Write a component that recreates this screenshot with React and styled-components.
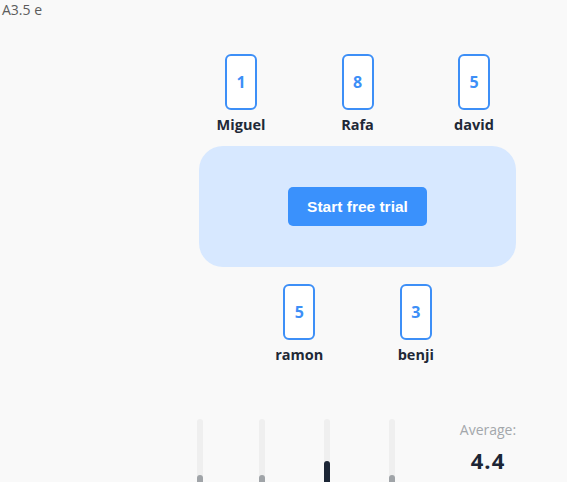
import React from "react";
import styled, { createGlobalStyle } from "styled-components";

const Global = createGlobalStyle`
  html, body { margin: 0; padding: 0; background: #f9f9f9; }
  body { font-family: "Open Sans", "Noto Sans", sans-serif; color: #1f2937; }
  * { box-sizing: border-box; }
`;

const Page = styled.div`
  width: 567px;
  height: 482px;
  overflow: hidden;
`;

const Version = styled.div`
  padding-left: 2px;
  font-size: 14px;
  line-height: 20px;
  color: #5c5c5c;
`;

const Board = styled.div`
  margin-left: 199px;
  width: 317px;
  padding-top: 34px;
  display: flex;
  flex-direction: column;
`;

const PlayerRow = styled.div`
  display: flex;
  justify-content: center;
  gap: 32.5px;
  margin-top: ${(p) => p.$top || 0}px;
`;

const Player = styled.div`
  width: 84px;
  display: flex;
  flex-direction: column;
  align-items: center;
`;

const Card = styled.div`
  width: 32px;
  height: 56px;
  border: 2px solid #3d8ff7;
  border-radius: 6px;
  background: #ffffff;
  display: flex;
  align-items: center;
  justify-content: center;
  font-size: 16px;
  font-weight: 700;
  color: #3d8ff7;
`;

const Name = styled.div`
  margin-top: 5px;
  font-size: 14.5px;
  font-weight: 700;
  line-height: 20px;
  color: #1f2937;
`;

const Table = styled.div`
  margin-top: 11px;
  height: 121px;
  border-radius: 24px;
  background: #d7e8ff;
  display: flex;
  align-items: center;
  justify-content: center;
`;

const TrialButton = styled.button`
  width: 139px;
  height: 39px;
  border: none;
  border-radius: 5px;
  background: #3a91fc;
  color: #ffffff;
  font-family: "Liberation Sans", Arial, sans-serif;
  font-size: 15.5px;
  font-weight: 700;
  cursor: pointer;
`;

const Stats = styled.div`
  margin-left: 197px;
  margin-top: 54px;
  display: flex;
  align-items: flex-start;
`;

const Bars = styled.div`
  display: grid;
  grid-template-columns: 62px 65px 65px 6px;
`;

const Track = styled.div`
  width: 6px;
  height: 100px;
  border-radius: 3px;
  background: #efefef;
  display: flex;
  flex-direction: column;
  justify-content: flex-end;
`;

const Fill = styled.div`
  width: 6px;
  border-radius: 3px;
  background: ${(p) => (p.$active ? "#1c2636" : "#a0a4a8")};
`;

const Average = styled.div`
  margin-left: 60px;
  width: 66px;
  display: flex;
  flex-direction: column;
  align-items: center;
  padding-top: 1px;
`;

const AvgLabel = styled.div`
  font-size: 14px;
  line-height: 20px;
  color: #a3a7ab;
`;

const AvgValue = styled.div`
  margin-top: 6px;
  font-size: 22px;
  line-height: 28px;
  font-weight: 700;
  letter-spacing: 1px;
  color: #1c2636;
`;

const top = [
  { name: "Miguel", v: 1 },
  { name: "Rafa", v: 8 },
  { name: "david", v: 5 },
];
const bottom = [
  { name: "ramon", v: 5 },
  { name: "benji", v: 3 },
];
const bars = [
  { h: 44, active: false },
  { h: 44, active: false },
  { h: 58, active: true },
  { h: 44, active: false },
];

export default function App() {
  return (
    <Page>
      <Global />
      <Version>A3.5 e</Version>
      <Board>
        <PlayerRow>
          {top.map((p) => (
            <Player key={p.name}>
              <Card>{p.v}</Card>
              <Name>{p.name}</Name>
            </Player>
          ))}
        </PlayerRow>
        <Table>
          <TrialButton>Start free trial</TrialButton>
        </Table>
        <PlayerRow $top={17}>
          {bottom.map((p) => (
            <Player key={p.name}>
              <Card>{p.v}</Card>
              <Name>{p.name}</Name>
            </Player>
          ))}
        </PlayerRow>
      </Board>
      <Stats>
        <Bars>
          {bars.map((b, i) => (
            <Track key={i}>
              <Fill $active={b.active} style={{ height: b.h }} />
            </Track>
          ))}
        </Bars>
        <Average>
          <AvgLabel>Average:</AvgLabel>
          <AvgValue>4.4</AvgValue>
        </Average>
      </Stats>
    </Page>
  );
}
